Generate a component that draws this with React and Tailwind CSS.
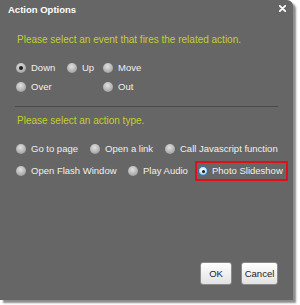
import React from "react";

function Radio({ checked, blue }) {
  if (blue) {
    return (
      <span className="inline-block w-[10px] h-[10px] rounded-full bg-[radial-gradient(circle_at_50%_40%,#ffffff_0%,#cfeaf9_45%,#3a8fd0_100%)] border border-[#2d78b8] relative shrink-0">
        <span className="absolute left-[2.5px] top-[2.5px] w-[3px] h-[3px] rounded-full bg-[#1a1a1a]" />
      </span>
    );
  }
  return (
    <span className="inline-block w-[10px] h-[10px] rounded-full bg-[radial-gradient(circle_at_45%_35%,#e0e0e0_0%,#b8b8b8_50%,#8c8c8c_100%)] relative shrink-0">
      {checked && (
        <span className="absolute left-[3px] top-[3px] w-[4px] h-[4px] rounded-full bg-[#1a1a1a]" />
      )}
    </span>
  );
}

function Opt({ label, checked, className = "" }) {
  return (
    <div className={"flex items-center gap-[5px] whitespace-nowrap " + className}>
      <Radio checked={checked} />
      <span>{label}</span>
    </div>
  );
}

export default function App() {
  return (
    <div className="w-[300px] h-[305px] bg-white relative font-['Liberation_Sans',Arial,sans-serif]">
      <div className="w-[293px] h-[300px] bg-[#666666] rounded-tr-[6px] shadow-[3px_3px_2px_rgba(0,0,0,0.45)] text-[9.5px] leading-[14px] text-[#f0f0f0] flex flex-col">
        <div className="flex items-center justify-between pl-[8px] pr-[7px] h-[20px]">
          <span className="font-bold text-[9.5px] text-white">Action Options</span>
          <svg width="7" height="7" viewBox="0 0 7 7" className="mb-[4px]">
            <path d="M0.8 0.8 L6.2 6.2 M6.2 0.8 L0.8 6.2" stroke="#ffffff" strokeWidth="1.8" strokeLinecap="round" />
          </svg>
        </div>
        <div className="pl-[17px] mt-[13px] h-[14px] flex items-center text-[10px] text-[#c5cf2a] whitespace-nowrap">
          Please select an event that fires the related action.
        </div>
        <div className="pl-[16px] mt-[14px] h-[14px] flex items-center">
          <Opt label="Down" checked className="w-[51px]" />
          <Opt label="Up" className="w-[36px]" />
          <Opt label="Move" />
        </div>
        <div className="pl-[16px] mt-[5px] h-[14px] flex items-center">
          <Opt label="Over" className="w-[87px]" />
          <Opt label="Out" />
        </div>
        <div className="mx-[15px] mt-[12px] h-px bg-[#4a4a4a]" />
        <div className="pl-[17px] mt-[7px] h-[14px] flex items-center text-[10px] text-[#c5cf2a] whitespace-nowrap">
          Please select an action type.
        </div>
        <div className="pl-[16px] mt-[14px] h-[14px] flex items-center">
          <Opt label="Go to page" className="w-[74px]" />
          <Opt label="Open a link" className="w-[75px]" />
          <Opt label="Call Javascript function" />
        </div>
        <div className="pl-[16px] mt-[5px] h-[20px] flex items-center">
          <Opt label="Open Flash Window" className="w-[112px]" />
          <Opt label="Play Audio" className="w-[67px]" />
          <div className="flex items-center gap-[4px] border-2 border-[#e0101a] pl-[1px] h-[20px] w-[93px] whitespace-nowrap">
            <Radio blue />
            <span>Photo Slideshow</span>
          </div>
        </div>
        <div className="flex-1" />
        <div className="flex justify-end gap-[9px] pr-[15px] pb-[15px]">
          <button className="w-[32px] h-[23px] rounded-[3px] bg-[linear-gradient(#ffffff,#e2e2e2)] border border-[#8a8a8a] text-[#222] text-[9.5px]">OK</button>
          <button className="w-[37px] h-[23px] rounded-[3px] bg-[linear-gradient(#ffffff,#e2e2e2)] border border-[#8a8a8a] text-[#222] text-[9.5px]">Cancel</button>
        </div>
      </div>
    </div>
  );
}
